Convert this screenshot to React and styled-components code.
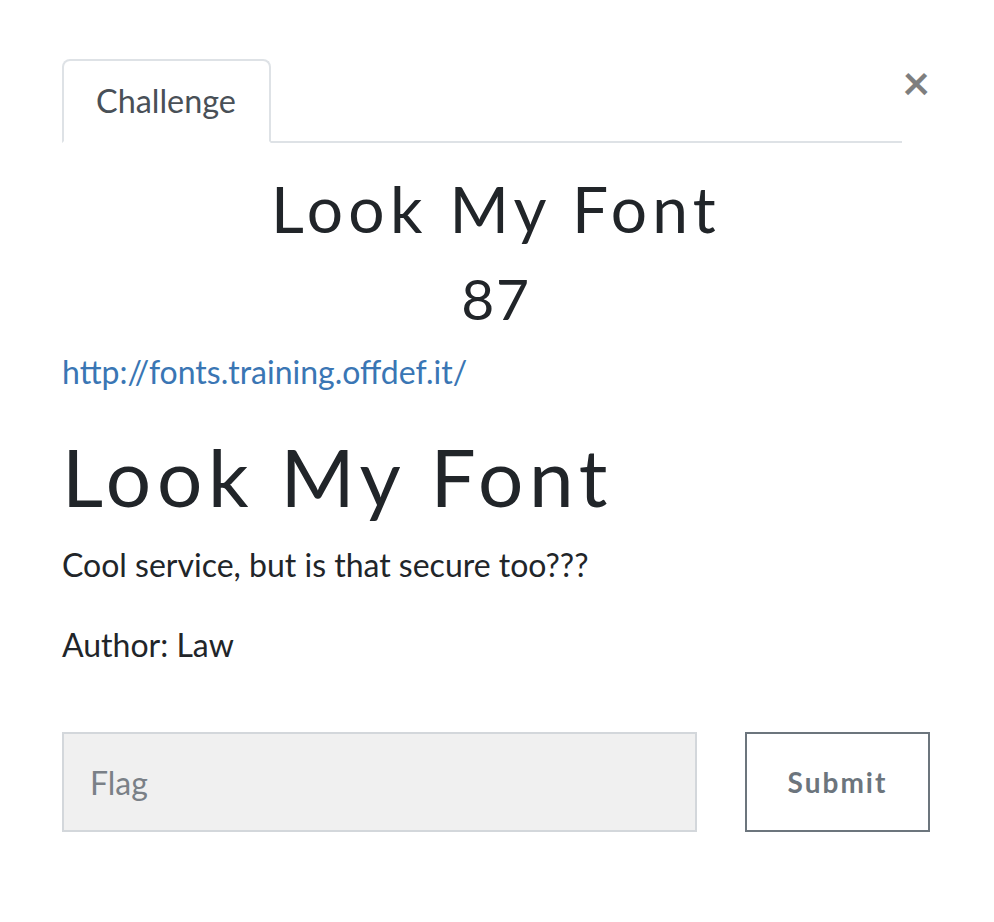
import styled, { createGlobalStyle } from "styled-components";

const GlobalStyle = createGlobalStyle`
  html, body {
    margin: 0;
    padding: 0;
    background: #ffffff;
  }
  body {
    font-family: "Lato", "Liberation Sans", sans-serif;
    font-size: 32px;
    line-height: 1.5;
    color: #212529;
  }
`;

const Modal = styled.div`
  padding: 59px 64px 40px 62px;
`;

const Header = styled.div`
  display: flex;
  align-items: flex-start;
`;

const Tabs = styled.ul`
  flex: 1;
  display: flex;
  margin: 0;
  padding: 0;
  list-style: none;
  border-bottom: 2px solid #dee2e6;
`;

const Tab = styled.li`
  margin-bottom: -2px;
  padding: 16px 33px 16px 32px;
  font-size: 32.4px;
  line-height: 48px;
  color: #495057;
  background: #fff;
  border: 2px solid ${(p) => (p.$active ? "#dee2e6" : "transparent")};
  border-bottom-color: ${(p) => (p.$active ? "#fff" : "transparent")};
  border-radius: 8px 8px 0 0;
`;

const Close = styled.button`
  width: 28px;
  margin: -1px 0 0 0;
  padding: 0;
  border: 0;
  background: none;
  font-family: "Lato", sans-serif;
  font-size: 48px;
  font-weight: 700;
  line-height: 1;
  color: #000;
  opacity: 0.5;
  text-align: right;
  cursor: pointer;
`;

const Title = styled.h2`
  margin: 28px 0 16px;
  font-family: "Lato", sans-serif;
  font-size: 64px;
  font-weight: 400;
  line-height: 1.2;
  letter-spacing: 0.083em;
  text-align: center;
`;

const Value = styled.h3`
  margin: 0 0 16px;
  font-family: "Lato", sans-serif;
  font-size: 57px;
  font-weight: 400;
  line-height: 1.2;
  letter-spacing: 0.03em;
  text-align: center;
`;

const Paragraph = styled.p`
  margin: 0 0 32px;
`;

const UrlLink = styled.a`
  color: #3a76b4;
  text-decoration: none;
`;

const BigHeading = styled.h1`
  margin: 0 0 17px;
  font-family: "Lato", sans-serif;
  font-size: 80px;
  font-weight: 400;
  line-height: 1.2;
  letter-spacing: 0.071em;
`;

const FlagRow = styled.form`
  display: flex;
  gap: 48px;
  margin-top: 63px;
`;

const FlagInput = styled.input`
  flex: 1;
  height: 100px;
  box-sizing: border-box;
  padding: 0 26px;
  font-family: "Lato", sans-serif;
  font-size: 32px;
  color: #495057;
  background: #f0f0f0;
  border: 2px solid #d3d7db;
  border-radius: 0;
  outline: none;

  &::placeholder {
    color: #7a8087;
  }
`;

const SubmitButton = styled.button`
  width: 185px;
  height: 100px;
  box-sizing: border-box;
  font-family: "Lato", sans-serif;
  font-size: 28px;
  font-weight: 700;
  letter-spacing: 2px;
  color: #6c757d;
  background: #fff;
  border: 2px solid #6c757d;
  border-radius: 0;
  cursor: pointer;
`;

export default function App() {
  return (
    <>
      <GlobalStyle />
      <Modal>
        <Header>
          <Tabs>
            <Tab $active>Challenge</Tab>
          </Tabs>
          <Close type="button">×</Close>
        </Header>
        <Title>Look My Font</Title>
        <Value>87</Value>
        <div>
          <Paragraph>
            <UrlLink href="#">http://fonts.training.offdef.it/</UrlLink>
          </Paragraph>
          <BigHeading>Look My Font</BigHeading>
          <Paragraph>Cool service, but is that secure too???</Paragraph>
          <Paragraph>Author: Law</Paragraph>
        </div>
        <FlagRow onSubmit={(e) => e.preventDefault()}>
          <FlagInput type="text" placeholder="Flag" />
          <SubmitButton type="submit">Submit</SubmitButton>
        </FlagRow>
      </Modal>
    </>
  );
}
